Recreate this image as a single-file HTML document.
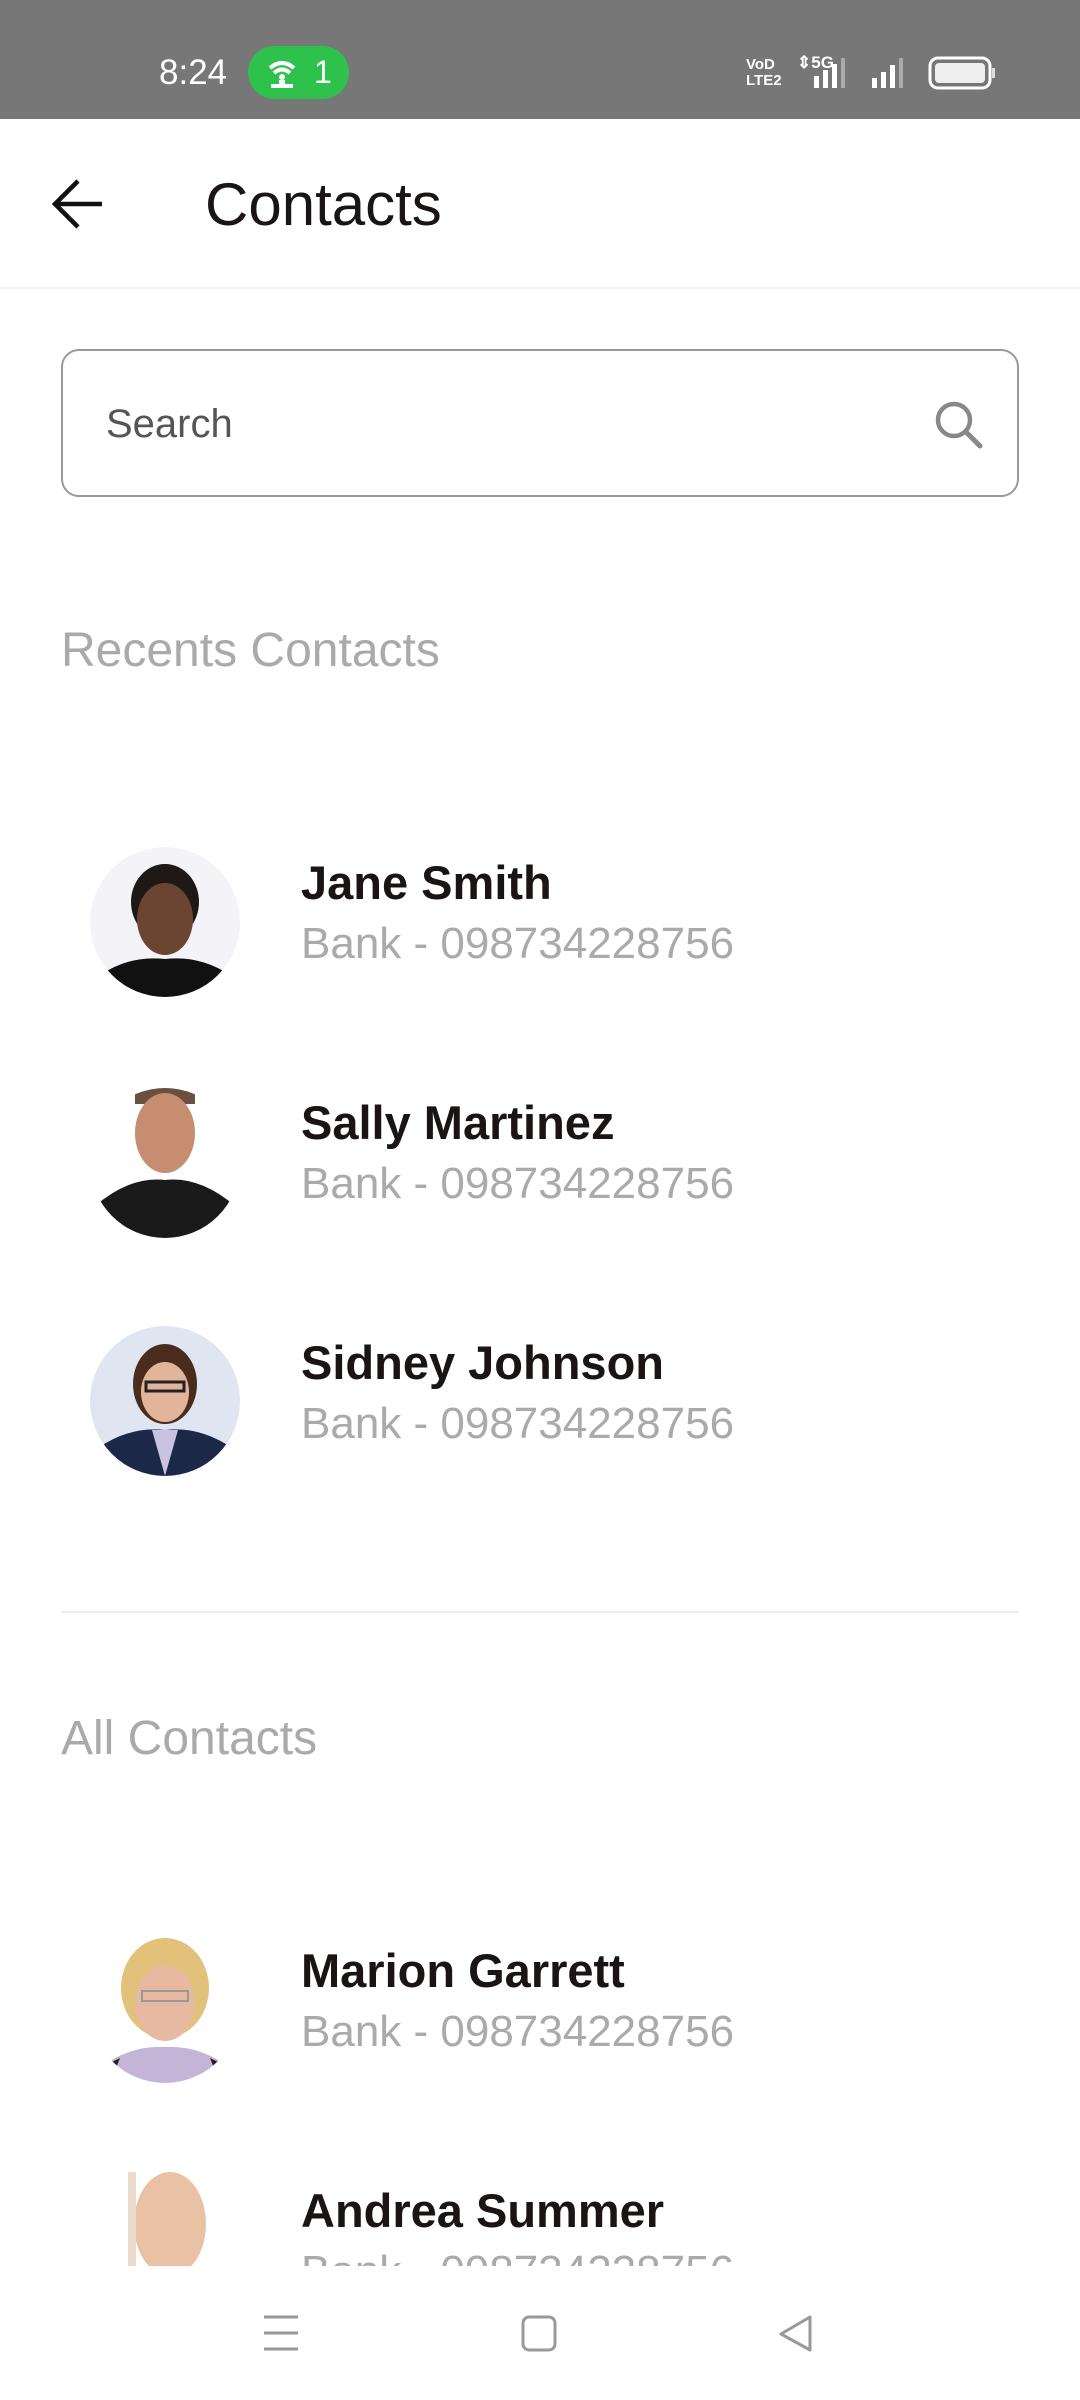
<!DOCTYPE html>
<html><head><meta charset="utf-8"><style>
*{margin:0;padding:0;box-sizing:border-box}
body{width:1080px;height:2400px;background:#fff;font-family:"Liberation Sans",sans-serif;position:relative;overflow:hidden}
.abs{position:absolute}
.sb{left:0;top:0;width:1080px;height:119px;background:#777}
.t{white-space:nowrap;line-height:1}
.name{font-weight:bold;font-size:47px;color:#1a1414;left:301px}
.sub{font-size:44px;color:#aaa;left:301px}
.av{left:90px;width:150px;height:150px;border-radius:50%;overflow:hidden}
</style></head><body>
<div class="abs sb"></div>
<div class="abs t" style="left:159px;top:55px;font-size:35px;color:#fff">8:24</div>
<div class="abs" style="left:248px;top:46px;width:101px;height:53px;border-radius:27px;background:#2ec24c"></div>
<svg class="abs" style="left:262px;top:56px" width="40" height="36" viewBox="0 0 40 36"><path d="M8 12 Q20 2 32 12 M12 17 Q20 10 28 17" stroke="#fff" stroke-width="4" fill="none"/><circle cx="20" cy="21" r="3" fill="#fff"/><path d="M17 24h6v4h8v4H9v-4h8z" fill="#fff"/></svg>
<div class="abs t" style="left:314px;top:56px;font-size:32px;color:#fff">1</div>
<div class="abs t" style="left:746px;top:57px;font-size:15px;color:#fff;font-weight:bold;line-height:16px">VoD<br>LTE2</div>
<div class="abs t" style="left:797px;top:54px;font-size:17px;color:#fff;font-weight:bold">⇕5G</div>
<svg class="abs" style="left:812px;top:56px" width="105" height="34"><g fill="#fff"><rect x="2" y="20" width="5" height="12"/><rect x="11" y="14" width="5" height="18"/><rect x="20" y="8" width="5" height="24"/><rect x="29" y="2" width="4" height="30" fill="#aaa"/><rect x="60" y="22" width="5" height="10"/><rect x="69" y="16" width="5" height="16"/><rect x="78" y="9" width="5" height="23"/><rect x="87" y="2" width="4" height="30" fill="#aaa"/></g></svg>
<svg class="abs" style="left:928px;top:56px" width="70" height="34"><rect x="2" y="2" width="60" height="30" rx="8" fill="none" stroke="#fff" stroke-width="3"/><rect x="7" y="7" width="50" height="20" rx="4" fill="#eee"/><rect x="64" y="12" width="3" height="10" fill="#ddd"/></svg>
<svg class="abs" style="left:50px;top:178px" width="56" height="52" viewBox="0 0 56 52"><path d="M28 3 L5 26 L28 49 M5 26 H52" stroke="#111" stroke-width="4.5" fill="none"/></svg>
<div class="abs t" style="left:205px;top:175px;font-size:60px;color:#1a1414">Contacts</div>
<div class="abs" style="left:0;top:287px;width:1080px;height:2px;background:#f3f3f3"></div>
<div class="abs" style="left:61px;top:349px;width:958px;height:148px;border:2px solid #999;border-radius:18px"></div>
<div class="abs t" style="left:106px;top:404px;font-size:40px;color:#555">Search</div>
<svg class="abs" style="left:930px;top:396px" width="56" height="56" viewBox="0 0 56 56"><circle cx="24" cy="24" r="16" stroke="#888" stroke-width="4.5" fill="none"/><path d="M36 36 L50 50" stroke="#888" stroke-width="5" stroke-linecap="round"/></svg>
<div class="abs t" style="left:61px;top:627px;font-size:48px;color:#aaa">Recents Contacts</div>

<div class="abs av" style="top:847px"><svg width="150" height="150"><rect width="150" height="150" fill="#f4f4f8"/><ellipse cx="75" cy="55" rx="34" ry="38" fill="#1e1816"/><ellipse cx="75" cy="72" rx="28" ry="36" fill="#6b4432"/><path d="M0 150 L10 128 Q40 108 75 112 Q110 108 140 128 L150 150z" fill="#111"/></svg></div>
<div class="abs t name" style="top:859px">Jane Smith</div>
<div class="abs t sub" style="top:922px">Bank - 098734228756</div>

<div class="abs av" style="top:1088px"><svg width="150" height="150"><rect width="150" height="150" fill="#fff"/><rect x="45" y="0" width="60" height="16" fill="#6a5040"/><ellipse cx="75" cy="45" rx="30" ry="40" fill="#c78d70"/><path d="M0 150 L5 118 Q40 88 75 92 Q110 88 145 118 L150 150z" fill="#1a1a1a"/></svg></div>
<div class="abs t name" style="top:1099px">Sally Martinez</div>
<div class="abs t sub" style="top:1162px">Bank - 098734228756</div>

<div class="abs av" style="top:1326px"><svg width="150" height="150"><rect width="150" height="150" fill="#dfe6f2"/><ellipse cx="75" cy="58" rx="32" ry="40" fill="#4a2c1e"/><ellipse cx="75" cy="66" rx="24" ry="30" fill="#e2b49a"/><rect x="56" y="56" width="38" height="9" fill="none" stroke="#222" stroke-width="3"/><path d="M0 150 L8 122 Q40 100 75 104 Q110 100 142 122 L150 150z" fill="#1c2848"/><path d="M62 104 L75 150 L88 104z" fill="#c9c2e0"/></svg></div>
<div class="abs t name" style="top:1339px">Sidney Johnson</div>
<div class="abs t sub" style="top:1402px">Bank - 098734228756</div>

<div class="abs" style="left:61px;top:1611px;width:958px;height:2px;background:#eee"></div>
<div class="abs t" style="left:61px;top:1715px;font-size:48px;color:#aaa">All Contacts</div>

<div class="abs av" style="top:1933px"><svg width="150" height="150"><rect width="150" height="150" fill="#fff"/><ellipse cx="75" cy="55" rx="44" ry="50" fill="#e2c27a"/><ellipse cx="75" cy="70" rx="30" ry="38" fill="#e6b9a0"/><rect x="52" y="58" width="46" height="10" fill="none" stroke="#999" stroke-width="2"/><path d="M0 150 L10 135 Q40 112 75 114 Q110 112 140 135 L150 150z" fill="#c3b4d8"/><path d="M0 150 L10 135 L30 125 L20 150z M150 150 L140 135 L120 125 L130 150z" fill="#222"/></svg></div>
<div class="abs t name" style="top:1947px">Marion Garrett</div>
<div class="abs t sub" style="top:2010px">Bank - 098734228756</div>

<div class="abs" style="left:120px;top:2172px;width:100px;height:94px;overflow:hidden"><svg width="100" height="94"><ellipse cx="50" cy="52" rx="36" ry="52" fill="#e9c1a4"/><rect x="8" y="0" width="8" height="94" fill="#eadccc"/></svg></div>
<div class="abs t name" style="top:2187px">Andrea Summer</div>
<div class="abs" style="left:290px;top:2250px;width:500px;height:16px;overflow:hidden"><div class="t" style="font-size:44px;color:#aaa;margin-left:11px">Bank - 098734228756</div></div>

<svg class="abs" style="left:262px;top:2314px" width="38" height="38"><path d="M2 3h34M2 19h34M2 35h34" stroke="#999" stroke-width="3"/></svg>
<svg class="abs" style="left:520px;top:2314px" width="38" height="38"><rect x="3" y="3" width="32" height="33" rx="6" fill="none" stroke="#999" stroke-width="3"/></svg>
<svg class="abs" style="left:777px;top:2314px" width="38" height="38"><path d="M33 3 L4 20 L33 36z" fill="none" stroke="#999" stroke-width="3" stroke-linejoin="round"/></svg>
</body></html>
